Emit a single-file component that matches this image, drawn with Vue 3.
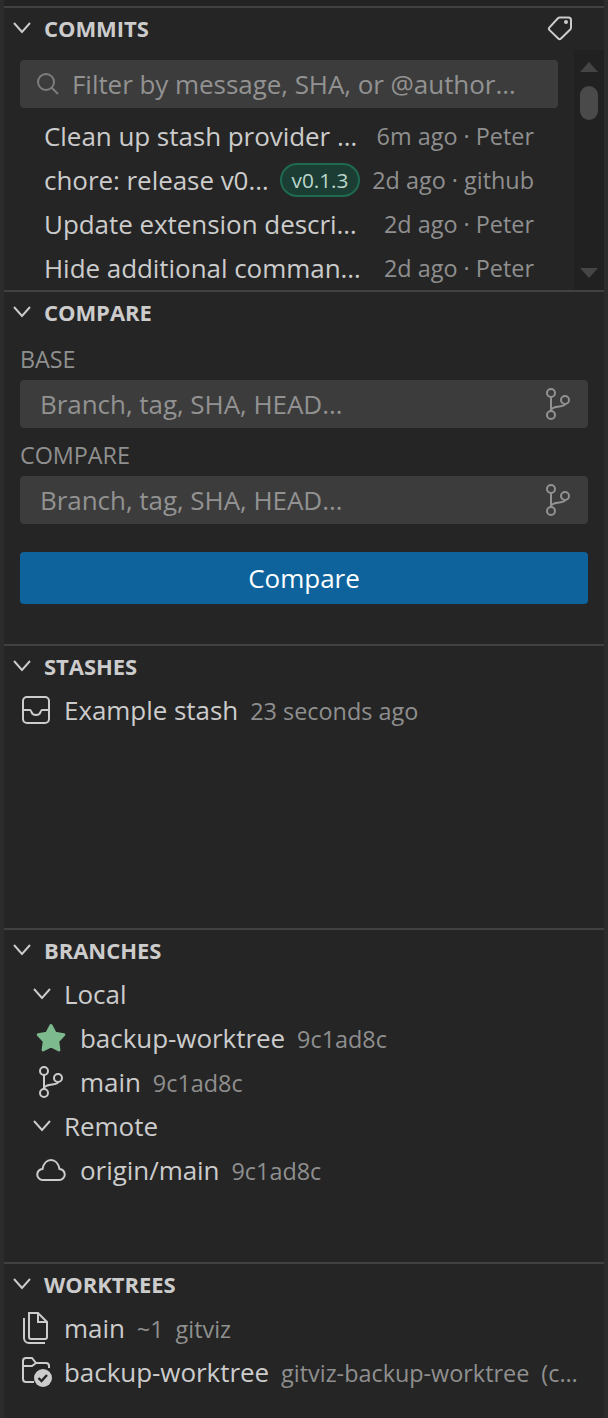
<script setup>
const commits = [
  { title: 'Clean up stash provider …', meta: '6m ago · Peter' },
  { title: 'chore: release v0…', tag: 'v0.1.3', meta: '2d ago · github' },
  { title: 'Update extension descri…', meta: '2d ago · Peter' },
  { title: 'Hide additional comman…', meta: '2d ago · Peter' }
]
const fields = ['BASE', 'COMPARE']
</script>

<template>
  <div class="root">
    <div class="top"></div>
    <section class="pane commits">
      <header class="head">
        <svg class="chev" viewBox="0 0 20 14"><path d="M2 2l8 9 8-9" /></svg>
        <span>COMMITS</span>
        <svg class="tag" viewBox="0 0 26 26">
          <path d="M13 2.500h8.500a2.500 2.500 0 0 1 2.500 2.500v7.500a3 3 0 0 1-.8 2L14 23.500a2 2 0 0 1-2.800 0l-8.600-8.400a2 2 0 0 1-.1-2.800L10.700 3.500a3 3 0 0 1 2.300-1z" />
          <circle cx="19" cy="7" r="2" class="fill" />
        </svg>
      </header>
      <div class="commit-body">
        <div class="commit-main">
          <div class="filter">
            <svg class="search" viewBox="0 0 22 22">
              <circle cx="9" cy="9" r="8" />
              <path d="M14.700 14.700L21 21" />
            </svg>
            <span>Filter by message, SHA, or @author…</span>
          </div>
          <div class="commit-list">
            <div v-for="c in commits" :key="c.title" class="commit">
              <span class="title">{{ c.title }}</span>
              <span v-if="c.tag" class="badge">{{ c.tag }}</span>
              <span class="meta">{{ c.meta }}</span>
            </div>
          </div>
        </div>
        <div class="scrollbar">
          <i class="up"></i>
          <i class="thumb"></i>
          <i class="down"></i>
        </div>
      </div>
    </section>

    <section class="pane compare">
      <header class="head">
        <svg class="chev" viewBox="0 0 20 14"><path d="M2 2l8 9 8-9" /></svg>
        <span>COMPARE</span>
      </header>
      <div class="compare-body">
        <template v-for="f in fields" :key="f">
          <div class="label">{{ f }}</div>
          <div class="input">
            <span>Branch, tag, SHA, HEAD…</span>
            <svg class="branch" viewBox="0 0 26 32">
              <circle cx="6" cy="5" r="4" />
              <circle cx="6" cy="27" r="4" />
              <circle cx="20" cy="12" r="4" />
              <path d="M6 9v14M6 22c1-3 5-3 8-3.500s6-.5 6-2.500" />
            </svg>
          </div>
        </template>
        <button class="btn">Compare</button>
      </div>
    </section>

    <section class="pane stashes">
      <header class="head">
        <svg class="chev" viewBox="0 0 20 14"><path d="M2 2l8 9 8-9" /></svg>
        <span>STASHES</span>
      </header>
      <div class="row lvl0">
        <svg class="ico" viewBox="0 0 28 28">
          <rect x="1" y="1" width="26" height="26" rx="4" />
          <path d="M1 14h7c.5 0 1 .5 1.500 2 .5 2 2 3 4.500 3s4-1 4.500-3c.5-1.500 1-2 1.500-2h7" />
        </svg>
        <span class="name">Example stash</span>
        <span class="dim">23 seconds ago</span>
      </div>
    </section>

    <section class="pane branches">
      <header class="head">
        <svg class="chev" viewBox="0 0 20 14"><path d="M2 2l8 9 8-9" /></svg>
        <span>BRANCHES</span>
      </header>
      <div class="row lvl1">
        <svg class="chev sub" viewBox="0 0 20 14"><path d="M2 2l8 9 8-9" /></svg>
        <span class="name">Local</span>
      </div>
      <div class="row lvl2">
        <svg class="ico star" viewBox="0 0 30 30">
          <path d="M15 2.500l4.100 7.800 8.700 1.500-6.100 6.400 1.200 8.700-7.900-3.900-7.900 3.900 1.200-8.700-6.100-6.400 8.700-1.500z" />
        </svg>
        <span class="name">backup-worktree</span>
        <span class="dim">9c1ad8c</span>
      </div>
      <div class="row lvl2">
        <svg class="ico branch-tree" viewBox="0 0 26 32">
          <circle cx="6" cy="5" r="4" />
          <circle cx="6" cy="27" r="4" />
          <circle cx="20" cy="12" r="4" />
          <path d="M6 9v14M6 22c1-3 5-3 8-3.500s6-.5 6-2.500" />
        </svg>
        <span class="name">main</span>
        <span class="dim">9c1ad8c</span>
      </div>
      <div class="row lvl1">
        <svg class="chev sub" viewBox="0 0 20 14"><path d="M2 2l8 9 8-9" /></svg>
        <span class="name">Remote</span>
      </div>
      <div class="row lvl2">
        <svg class="ico cloud" viewBox="0 0 30 22">
          <path d="M7 21a5.500 5.500 0 0 1-.5-11C7.500 4.500 11 1 15 1s7.500 3.500 8.500 9a5.500 5.500 0 0 1-.5 11z" />
        </svg>
        <span class="name">origin/main</span>
        <span class="dim">9c1ad8c</span>
      </div>
    </section>

    <section class="pane worktrees">
      <header class="head">
        <svg class="chev" viewBox="0 0 20 14"><path d="M2 2l8 9 8-9" /></svg>
        <span>WORKTREES</span>
      </header>
      <div class="row lvl0">
        <svg class="ico files" viewBox="0 0 28 32">
          <path d="M7 1h9l9 9v15a2 2 0 0 1-2 2H9a2 2 0 0 1-2-2V1zM16 1v9h9" />
          <path d="M2 6v20a5 5 0 0 0 5 5h16" />
        </svg>
        <span class="name">main</span>
        <span class="dim">~1</span>
        <span class="dim">gitviz</span>
      </div>
      <div class="row lvl0">
        <svg class="ico folder" viewBox="0 0 32 30">
          <path d="M12 25H4a3 3 0 0 1-3-3V4a3 3 0 0 1 3-3h6l4 5h10a3 3 0 0 1 3 3v2M1 9h9l4-3" />
          <circle cx="21" cy="21" r="9" class="fill" />
          <path class="check" d="M16.500 21l3 3 5.500-6" />
        </svg>
        <span class="name">backup-worktree</span>
        <span class="dim">gitviz-backup-worktree</span>
        <span class="dim">(c…</span>
      </div>
    </section>
  </div>
</template>

<style scoped>
.root {
  width: 608px;
  height: 1418px;
  box-sizing: border-box;
  padding: 0 4px;
  background: #2c2c2c;
  overflow: hidden;
  font-family: "Open Sans", "Noto Sans", sans-serif;
  font-size: 26px;
  letter-spacing: -0.05px;
  color: #cccccc;
}
.top { height: 6px; background: #232323; }
.pane {
  box-sizing: border-box;
  border-top: 2px solid #414141;
  background: #252525;
}
.commits { height: 284px; }
.compare { height: 354px; }
.stashes { height: 284px; }
.branches { height: 334px; }
.worktrees { height: 156px; }
.head {
  height: 40px;
  margin-bottom: 2px;
  display: flex;
  align-items: center;
  font-size: 22px;
  font-weight: 700;
  color: #cccccc;
  padding-left: 8px;
}
.chev {
  width: 20px;
  height: 14px;
  flex: none;
  margin-right: 12px;
  fill: none;
  stroke: #cccccc;
  stroke-width: 1.900;
}
.tag {
  width: 26px;
  height: 26px;
  margin-left: auto;
  margin-right: 31px;
  fill: none;
  stroke: #cccccc;
  stroke-width: 2;
}
.fill { fill: #cccccc; stroke: none; }
.commit-body { display: flex; height: 240px; }
.commit-main { flex: 1; min-width: 0; padding: 10px 16px 0; }
.filter {
  height: 48px;
  display: flex;
  align-items: center;
  border-radius: 4px;
  background: #3c3c3c;
  color: #929292;
  padding-left: 17px;
  white-space: nowrap;
}
.search {
  width: 22px;
  height: 22px;
  margin-right: 13px;
  fill: none;
  stroke: #7d7d7d;
  stroke-width: 2;
}
.commit-list { padding-top: 6px; }
.commit {
  height: 44px;
  display: flex;
  align-items: center;
  padding-left: 24px;
  padding-right: 24px;
  white-space: nowrap;
}
.commit .meta { margin-left: auto; color: #8f8f8f; font-size: 23.400px; letter-spacing: 0; }
.badge {
  box-sizing: border-box;
  height: 34px;
  display: flex;
  align-items: center;
  margin-left: 11px;
  padding: 0 10px;
  border: 2px solid #1f6a50;
  border-radius: 17px;
  background: #1b3d33;
  color: #bcd6cc;
  font-size: 20.800px;
}
.scrollbar {
  width: 30px;
  flex: none;
  background: #212121;
  display: flex;
  flex-direction: column;
  align-items: center;
}
.scrollbar i { display: block; }
.up, .down {
  width: 0;
  height: 0;
  border-left: 9px solid transparent;
  border-right: 9px solid transparent;
}
.up { margin-top: 12px; border-bottom: 10px solid #454545; }
.thumb {
  width: 18px;
  height: 34px;
  margin-top: 14px;
  border-radius: 9px;
  background: #4a4a4a;
}
.down { margin-top: auto; margin-bottom: 12px; border-top: 10px solid #454545; }
.compare-body { padding: 0 16px; }
.label {
  height: 46px;
  padding-top: 4px;
  box-sizing: border-box;
  color: #8f8f8f;
  font-size: 23.400px;
  display: flex;
  align-items: center;
}
.input {
  height: 48px;
  display: flex;
  align-items: center;
  justify-content: space-between;
  border-radius: 4px;
  background: #3c3c3c;
  color: #929292;
  padding: 0 17px 0 20px;
  margin-bottom: 2px;
}
.branch {
  width: 26px;
  height: 32px;
  fill: none;
  stroke: #929292;
  stroke-width: 2;
}
.btn {
  display: block;
  width: 100%;
  height: 52px;
  margin-top: 28px;
  border: 0;
  border-radius: 4px;
  background: #0e639c;
  color: #ffffff;
  font: inherit;
}
.row {
  height: 44px;
  display: flex;
  align-items: center;
  white-space: nowrap;
}
.lvl0 { padding-left: 18px; }
.lvl1 { padding-left: 28px; }
.lvl2 { padding-left: 32px; }
.ico {
  width: 28px;
  height: 28px;
  flex: none;
  margin-right: 14px;
  fill: none;
  stroke: #cccccc;
  stroke-width: 2;
}
.chev.sub { margin-right: 12px; }
.star {
  width: 30px;
  height: 30px;
  fill: #7dbb8e;
  stroke: #7dbb8e;
  stroke-width: 3;
  stroke-linejoin: round;
  margin-right: 14px;
}
.branch-tree { width: 26px; height: 32px; margin-left: 2px; margin-right: 16px; }
.cloud { width: 30px; height: 22px; margin-right: 14px; }
.files { margin-right: 14px; height: 32px; }
.folder { width: 32px; height: 30px; margin-right: 10px; }
.check { stroke: #252525; stroke-width: 2.400; }
.dim { color: #8f8f8f; margin-left: 12px; margin-top: 2px; font-size: 23.400px; letter-spacing: 0; }
</style>

<style>
html, body { background: #2c2c2c; }
</style>
